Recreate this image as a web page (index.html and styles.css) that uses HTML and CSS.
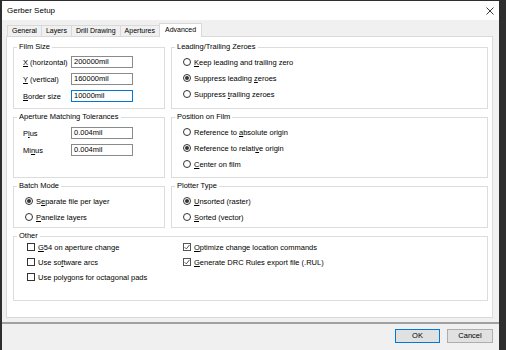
FILE: index.html
```html
<!DOCTYPE html>
<html>
<head>
    <meta charset="utf-8"/>
    <title>Gerber Setup</title>
    <link rel="stylesheet" href="styles.css">
</head>
<body>
<div class="dialog">
    <div class="titlebar">
        <span class="title">Gerber Setup</span>
        <svg class="close" viewBox="0 0 8 8"><path d="M0.5 0.5L7.5 7.5M7.5 0.5L0.5 7.5" stroke="#222" stroke-width="0.9" fill="none"/></svg>
    </div>
    <div class="tabs">
        <span class="tab">General</span>
        <span class="tab">Layers</span>
        <span class="tab">Drill Drawing</span>
        <span class="tab">Apertures</span>
        <span class="tab active">Advanced</span>
    </div>
    <div class="panel">
        <fieldset class="group">
            <legend>Film Size</legend>
            <div class="fields">
                <div class="field"><span class="lbl"><u>X</u> (horizontal)</span><span class="input">200000mil</span></div>
                <div class="field"><span class="lbl"><u>Y</u> (vertical)</span><span class="input">160000mil</span></div>
                <div class="field"><span class="lbl"><u>B</u>order size</span><span class="input focus">10000mil</span></div>
            </div>
        </fieldset>
        <fieldset class="group">
            <legend>Leading/Trailing Zeroes</legend>
            <div class="options">
                <div class="opt"><span class="radio"></span><span><u>K</u>eep leading and trailing zero</span></div>
                <div class="opt"><span class="radio on"></span><span>Suppress leading <u>z</u>eroes</span></div>
                <div class="opt"><span class="radio"></span><span>Suppress <u>t</u>railing zeroes</span></div>
            </div>
        </fieldset>
        <fieldset class="group">
            <legend>Aperture Matching Tolerances</legend>
            <div class="fields tol">
                <div class="field"><span class="lbl">P<u>l</u>us</span><span class="input">0.004mil</span></div>
                <div class="field"><span class="lbl">Mi<u>n</u>us</span><span class="input">0.004mil</span></div>
            </div>
        </fieldset>
        <fieldset class="group">
            <legend>Position on Film</legend>
            <div class="options">
                <div class="opt"><span class="radio"></span><span>Reference to <u>a</u>bsolute origin</span></div>
                <div class="opt"><span class="radio on"></span><span>Reference to relati<u>v</u>e origin</span></div>
                <div class="opt"><span class="radio"></span><span><u>C</u>enter on film</span></div>
            </div>
        </fieldset>
        <fieldset class="group">
            <legend>Batch Mode</legend>
            <div class="options">
                <div class="opt"><span class="radio on"></span><span>S<u>e</u>parate file per layer</span></div>
                <div class="opt"><span class="radio"></span><span><u>P</u>anelize layers</span></div>
            </div>
        </fieldset>
        <fieldset class="group">
            <legend>Plotter Type</legend>
            <div class="options">
                <div class="opt"><span class="radio on"></span><span><u>U</u>nsorted (raster)</span></div>
                <div class="opt"><span class="radio"></span><span><u>S</u>orted (vector)</span></div>
            </div>
        </fieldset>
        <fieldset class="group other">
            <legend>Other</legend>
            <div class="checks">
                <div class="opt"><span class="check"></span><span><u>G</u>54 on aperture change</span></div>
                <div class="opt"><span class="check"></span><span>Use so<u>f</u>tware arcs</span></div>
                <div class="opt"><span class="check"></span><span>Use polygons for octagonal pads</span></div>
                <div class="opt"><span class="check on"><svg viewBox="0 0 6 6"><path d="M0.6 3.2L2.3 4.9L5.5 0.9" stroke="#444" stroke-width="0.9" fill="none"/></svg></span><span><u>O</u>ptimize change location commands</span></div>
                <div class="opt"><span class="check on"><svg viewBox="0 0 6 6"><path d="M0.6 3.2L2.3 4.9L5.5 0.9" stroke="#444" stroke-width="0.9" fill="none"/></svg></span><span><u>G</u>enerate DRC Rules export file (.RUL)</span></div>
            </div>
        </fieldset>
    </div>
    <div class="footer">
        <span class="btn default">OK</span>
        <span class="btn">Cancel</span>
    </div>
</div>
</body>
</html>
```

FILE: styles.css
```css
* {
    margin: 0;
    padding: 0;
    box-sizing: border-box;
}
body {
    width: 506px;
    height: 350px;
    overflow: hidden;
    background: #2e2e2e;
    font-family: "Liberation Sans", Arial, sans-serif;
    font-size: 7.5px;
    color: #000;
}
.dialog {
    display: flex;
    flex-direction: column;
    width: 497px;
    height: 349px;
    margin: 1px 0 0 2px;
    background: #f0f0f0;
}
.titlebar {
    display: flex;
    align-items: center;
    justify-content: space-between;
    height: 19px;
    padding: 0 5px;
    background: #fff;
}
.title {
    font-size: 8px;
}
.close {
    width: 8px;
    height: 8px;
}
.tabs {
    display: flex;
    align-items: flex-end;
    height: 16px;
    padding-left: 5px;
}
.tab {
    height: 11px;
    margin-right: -1px;
    padding: 0 4px;
    font-size: 7px;
    line-height: 10px;
    background: #f0f0f0;
    border: 1px solid #d9d9d9;
    border-bottom: none;
}
.tab.active {
    position: relative;
    z-index: 1;
    height: 14px;
    margin-bottom: -1px;
    padding: 0 5px;
    line-height: 11px;
    background: #fff;
}
.panel {
    display: grid;
    grid-template-columns: 152px 317px;
    grid-template-rows: 67px 66px 47px 70px;
    gap: 3px 6px;
    align-content: start;
    height: 282px;
    margin: 0 6px 0 4px;
    padding: 5px 0 0 6px;
    background: #fff;
    border: 1px solid #d9d9d9;
}
.group {
    min-width: 0;
    border: 1px solid #dcdcdc;
}
.group legend {
    margin-left: 3px;
    padding: 0 2px;
    line-height: 10px;
}
.other {
    grid-column: 1 / 3;
}
.fields {
    display: flex;
    flex-direction: column;
    gap: 5px;
    padding: 4px 0 0 9px;
}
.fields.tol {
    padding-top: 5px;
}
.field {
    display: flex;
    align-items: center;
    height: 12px;
}
.field .lbl {
    width: 48px;
}
.input {
    width: 62px;
    height: 12px;
    padding-left: 2px;
    line-height: 10px;
    background: #fff;
    border: 1px solid #8a8a8a;
}
.input.focus {
    border-color: #0078d7;
}
.options {
    display: flex;
    flex-direction: column;
    gap: 4px;
    padding: 4px 0 0 11px;
}
.opt {
    display: flex;
    align-items: center;
    gap: 3px;
    height: 12px;
}
.radio {
    display: flex;
    align-items: center;
    justify-content: center;
    width: 8px;
    height: 8px;
    border: 1px solid #333;
    border-radius: 50%;
}
.radio.on::after {
    content: "";
    width: 4px;
    height: 4px;
    border-radius: 50%;
    background: #333;
}
.checks {
    display: grid;
    grid-template-columns: 156px 1fr;
    grid-template-rows: repeat(3, 12px);
    grid-auto-flow: column;
    row-gap: 3px;
    padding-left: 13px;
}
.check {
    display: flex;
    align-items: center;
    justify-content: center;
    width: 8px;
    height: 8px;
    border: 1px solid #333;
}
.check.on {
    border-color: #555;
}
.check svg {
    width: 6px;
    height: 6px;
}
.footer {
    display: flex;
    flex: 1;
    align-items: flex-start;
    justify-content: flex-end;
    gap: 7px;
    margin-top: 4px;
    padding: 5px 6px 0 0;
    border-top: 2px solid #a0a0a0;
}
.btn {
    width: 46px;
    height: 14px;
    line-height: 12px;
    text-align: center;
    background: #e1e1e1;
    border: 1px solid #adadad;
}
.btn.default {
    width: 45px;
    border-color: #0078d7;
}
```
